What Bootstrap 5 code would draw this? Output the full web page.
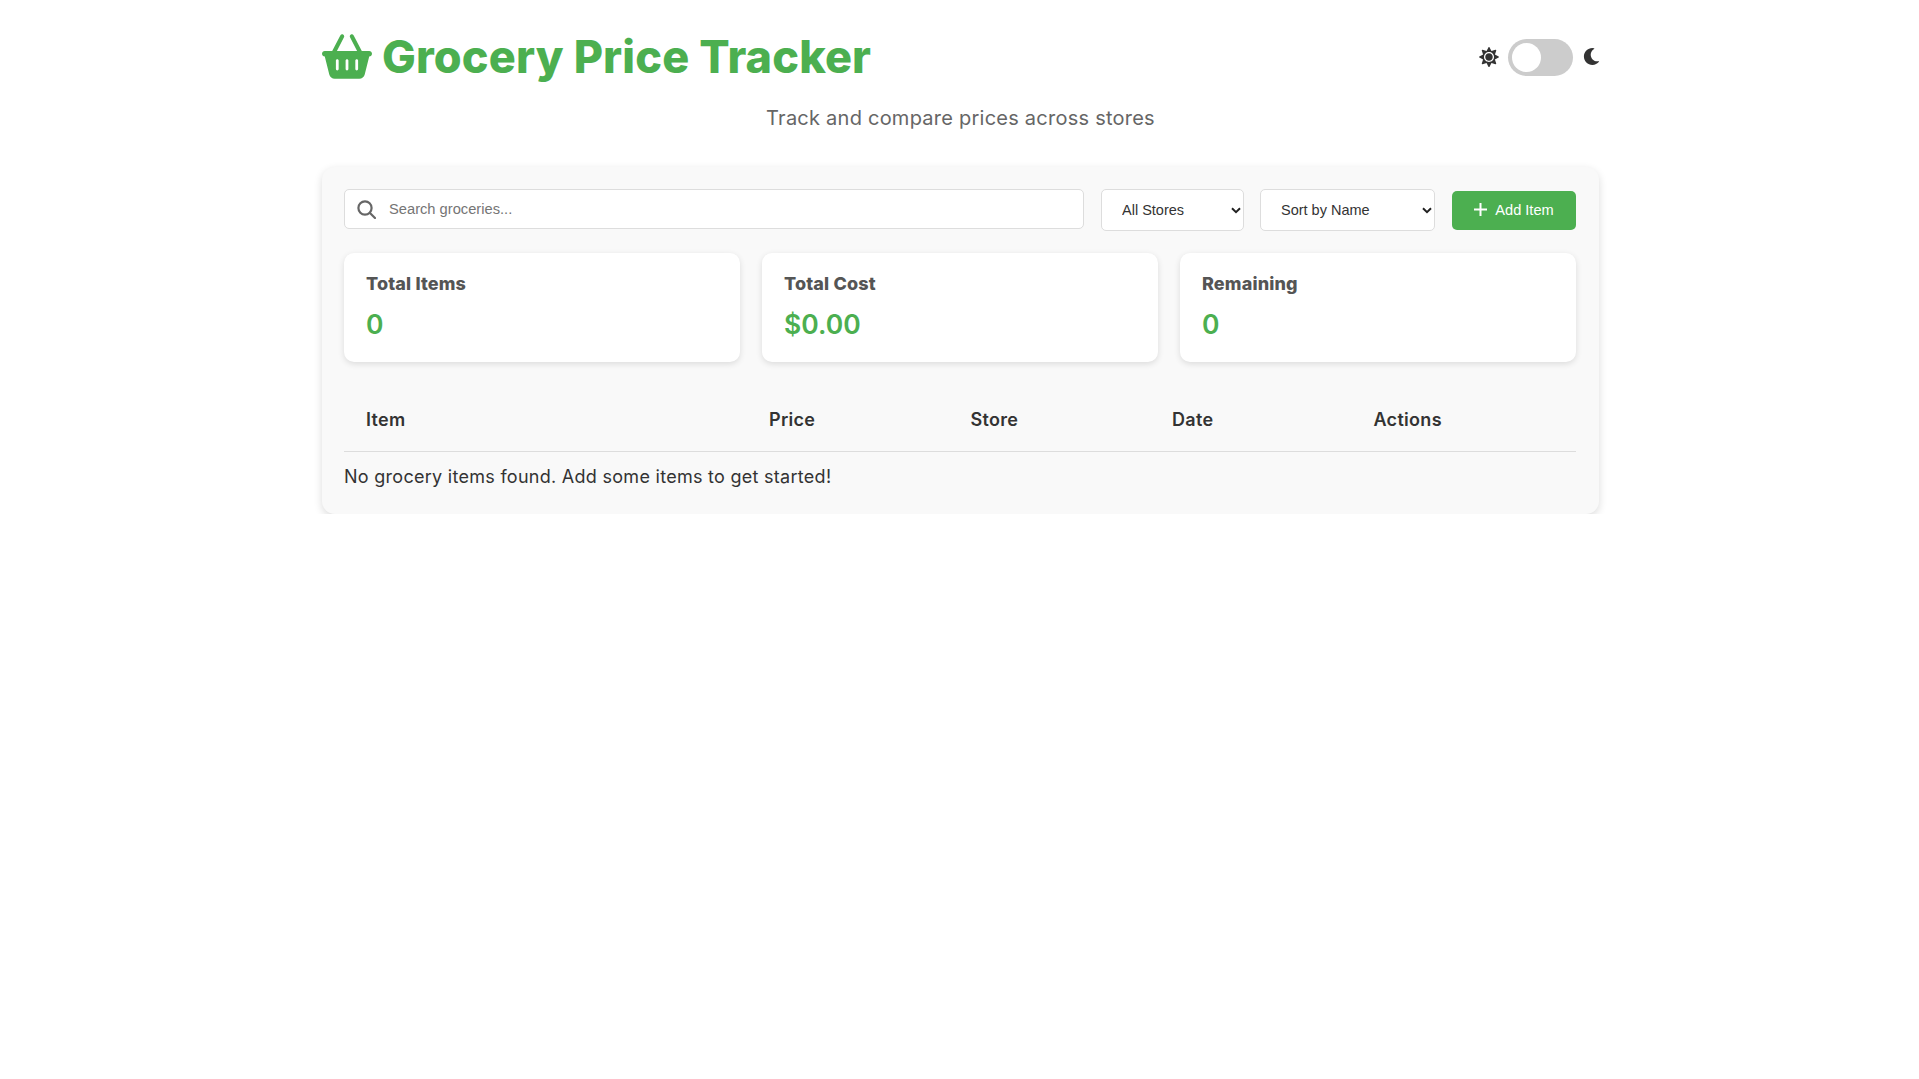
<!DOCTYPE html>
<html lang="en">
<head>
    <meta charset="UTF-8">
    <meta name="viewport" content="width=device-width, initial-scale=1.0">
    <title>Grocery Price Tracker</title>
    <link href="https://cdn.jsdelivr.net/npm/bootstrap@5.3.0/dist/css/bootstrap.min.css" rel="stylesheet">
    <style>
        body { font-family: Inter, "Open Sans", sans-serif; color: #333; background: #fff; }
        .page-wrap { width: 1277px; margin-left: 322px; }
        .top-row { height: 114px; padding-top: 33px; }
        .app-title { font-size: 45px; font-weight: 800; color: #4caf50; line-height: 47px; letter-spacing: .15px; }
        .basket-icon { width: 50px; height: 45px; fill: #4caf50; margin-right: 10px; }
        .sun-icon { width: 20px; height: 20px; fill: #333; margin-bottom: 2px; margin-right: 1px; }
        .moon-icon { width: 17px; height: 19px; fill: #333; margin-left: 2px; margin-right: -1px; margin-bottom: 2px; }
        .toggle-track { width: 65px; height: 37px; background: #ccc; border-radius: 19px; padding: 4px; }
        .toggle-knob { width: 29px; height: 29px; background: #fff; border-radius: 50%; }
        .toggle-box { margin-top: -10px; }
        .sub-title { font-size: 20px; color: #666; height: 60px; line-height: 20px; margin-top: -6px; letter-spacing: .24px; margin-bottom: -1px !important; }
        .tracker-panel { background: #f9f9f9; border-radius: 13px; padding: 22px 23px 22px 22px; height: 347px; box-shadow: 0 3px 9px rgba(0,0,0,.14); }
        .search-box { width: 740px; height: 40px; margin-right: 17px; }
        .search-box .form-control { height: 40px; padding-left: 44px; font: 14.7px "Liberation Sans", Arial, sans-serif; border-color: #ddd; border-radius: 5px; }
        .search-box .form-control::placeholder { color: #757575; }
        .search-icon { left: 13px; top: 11px; width: 19px; height: 19px; }
        .tool-select { height: 42px; font: 14.5px "Liberation Sans", Arial, sans-serif; color: #333; border-color: #ddd; border-radius: 5px; padding: 0 20px; background-image: url("data:image/svg+xml,%3csvg xmlns='http://www.w3.org/2000/svg' viewBox='0 0 10 7'%3e%3cpath fill='none' stroke='%23222' stroke-width='2' d='M1 1.2l4 4 4-4'/%3e%3c/svg%3e"); background-position: right 2px center; background-size: 10px 7px; }
        .store-select { width: 143px; margin-right: 16px; }
        .sort-select { width: 175px; margin-right: 17px; }
        .add-btn { width: 124px; height: 39px; background: #4caf50; color: #fff; border: 0; border-radius: 5px; font: 14.6px "Liberation Sans", Arial, sans-serif; margin-top: 2px; padding-bottom: 2px !important; }
        .add-btn:hover { background: #4caf50; color: #fff; }
        .stat-row { margin-top: 22px; gap: 22px; }
        .stat-box { flex: 1 1 0; height: 109px; background: #fff; border-radius: 10px; padding: 19px 22px; box-shadow: 0 2px 6px rgba(0,0,0,.12); }
        .stat-name { font-size: 18px; font-weight: 800; color: #555; line-height: 24px; letter-spacing: .15px; }
        .stat-val { font-size: 26.5px; font-weight: 600; color: #4caf50; line-height: 33px; margin-top: 12px; }
        .item-table { table-layout: fixed; margin: 22px 0 0; --bs-table-bg: transparent; --bs-table-border-color: #ddd; }
        .item-col { width: 403px; }
        .data-col { width: 201.5px; }
        .item-table th { padding: 24px 22px 19px; font-size: 18px; font-weight: 600; color: #333; line-height: 24px; letter-spacing: .3px; }
        .empty-msg { font-size: 18px; line-height: 24px; color: #333; margin-top: 13px; letter-spacing: .28px; }
    </style>
</head>
<body>
<div class="page-wrap">
    <div class="top-row d-flex justify-content-between align-items-start">
        <div class="app-title d-flex align-items-center">
            <svg class="basket-icon" viewBox="0 0 576 512"><path d="M253.3 35.1c6.1-11.8 1.5-26.3-10.2-32.4s-26.3-1.5-32.4 10.2L117.6 192H32c-17.7 0-32 14.3-32 32s14.3 32 32 32L83.9 463.5C91 492 116.6 512 146 512H430c29.4 0 55-20 62.1-48.5L544 256c17.7 0 32-14.3 32-32s-14.3-32-32-32H458.4L365.3 12.9C359.2 1.2 344.7-3.4 332.9 2.7s-16.3 20.6-10.2 32.4L404.3 192H171.7L253.3 35.1zM192 304v96c0 8.8-7.2 16-16 16s-16-7.2-16-16V304c0-8.8 7.2-16 16-16s16 7.2 16 16zm96-16c8.8 0 16 7.2 16 16v96c0 8.8-7.2 16-16 16s-16-7.2-16-16V304c0-8.8 7.2-16 16-16zm128 16v96c0 8.8-7.2 16-16 16s-16-7.2-16-16V304c0-8.8 7.2-16 16-16s16 7.2 16 16z"/></svg>
            <span>Grocery Price Tracker</span>
        </div>
        <div class="toggle-box d-flex align-items-center gap-2 pt-3">
            <svg class="sun-icon" viewBox="0 0 512 512"><path d="M256 160c-52.9 0-96 43.1-96 96s43.1 96 96 96 96-43.1 96-96-43.1-96-96-96zm246.4 80.5l-94.7-47.3 33.5-100.4c4.5-13.6-8.4-26.5-21.9-21.9l-100.4 33.5-47.4-94.8c-6.4-12.8-24.6-12.8-31 0l-47.3 94.7L92.7 70.8c-13.6-4.5-26.5 8.4-21.9 21.9l33.5 100.4-94.7 47.4c-12.8 6.4-12.8 24.6 0 31l94.7 47.3-33.5 100.5c-4.5 13.6 8.4 26.5 21.9 21.9l100.4-33.5 47.3 94.7c6.4 12.8 24.6 12.8 31 0l47.3-94.7 100.4 33.5c13.6 4.5 26.5-8.4 21.9-21.9l-33.5-100.4 94.7-47.3c13-6.5 13-24.7.2-31.1zm-155.9 106c-49.9 49.9-131.1 49.9-181 0-49.9-49.9-49.9-131.1 0-181 49.9-49.9 131.1-49.9 181 0 49.9 49.9 49.9 131.1 0 181z"/></svg>
            <div class="toggle-track"><div class="toggle-knob"></div></div>
            <svg class="moon-icon" viewBox="0 0 512 512"><path d="M283.211 512c78.962 0 151.079-35.925 198.857-94.792 7.068-8.708-.639-21.43-11.562-19.35-124.203 23.654-238.262-71.576-238.262-196.954 0-72.222 38.662-138.635 101.498-174.394 9.686-5.512 7.25-20.197-3.756-22.23A258.156 258.156 0 0 0 283.211 0c-141.309 0-256 114.511-256 256 0 141.309 114.511 256 256 256z"/></svg>
        </div>
    </div>
    <p class="sub-title text-center mb-0">Track and compare prices across stores</p>

    <div class="tracker-panel">
        <div class="d-flex align-items-start">
            <div class="search-box position-relative">
                <svg class="search-icon position-absolute" viewBox="0 0 19 19" fill="none" stroke="#666" stroke-width="2.2"><circle cx="8" cy="8" r="6.6"/><path d="M13 13l5 5" stroke-linecap="round"/></svg>
                <input type="text" class="form-control" placeholder="Search groceries...">
            </div>
            <select class="form-select tool-select store-select"><option>All Stores</option></select>
            <select class="form-select tool-select sort-select"><option>Sort by Name</option></select>
            <button type="button" class="btn add-btn d-flex align-items-center justify-content-center gap-2 p-0">
                <svg width="13" height="13" viewBox="0 0 13 13" stroke="#fff" stroke-width="2"><path d="M6.5 0v13M0 6.5h13"/></svg>
                <span>Add Item</span>
            </button>
        </div>

        <div class="stat-row d-flex">
            <div class="stat-box"><div class="stat-name">Total Items</div><div class="stat-val">0</div></div>
            <div class="stat-box"><div class="stat-name">Total Cost</div><div class="stat-val">$0.00</div></div>
            <div class="stat-box"><div class="stat-name">Remaining</div><div class="stat-val">0</div></div>
        </div>

        <table class="table item-table">
            <colgroup><col class="item-col"><col class="data-col"><col class="data-col"><col class="data-col"><col></colgroup>
            <thead>
                <tr><th>Item</th><th>Price</th><th>Store</th><th>Date</th><th>Actions</th></tr>
            </thead>
        </table>
        <div class="empty-msg">No grocery items found. Add some items to get started!</div>
    </div>
</div>
<script src="https://cdn.jsdelivr.net/npm/bootstrap@5.3.0/dist/js/bootstrap.bundle.min.js"></script>
</body>
</html>
